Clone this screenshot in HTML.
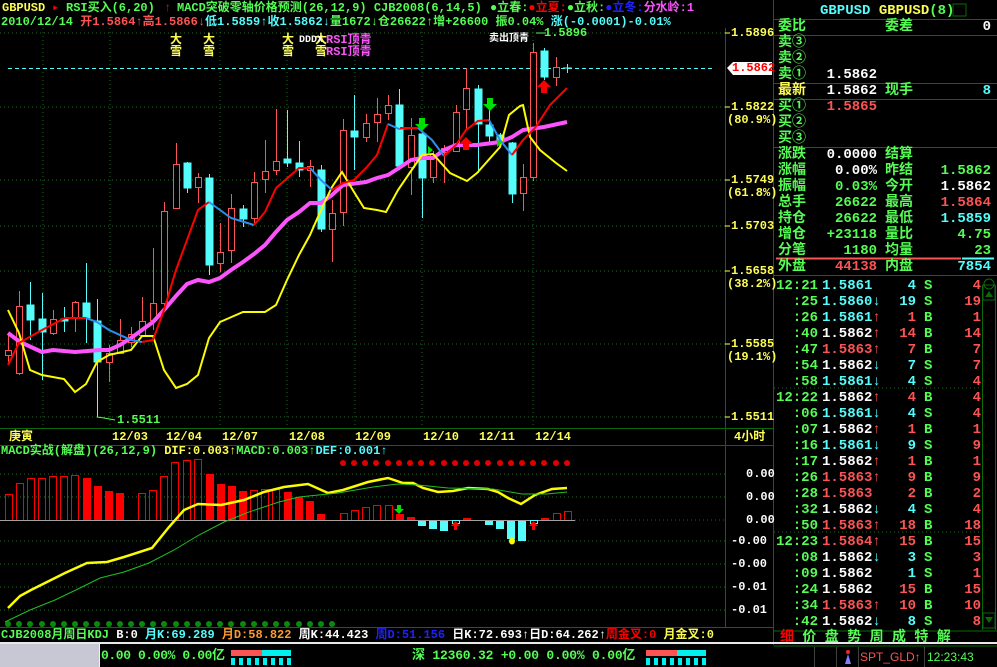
<!DOCTYPE html>
<html><head><meta charset="utf-8">
<style>
*{margin:0;padding:0}
body{width:997px;height:667px;background:#000;overflow:hidden;position:relative;font-family:"Liberation Mono","Noto Sans CJK SC",monospace;font-weight:bold}
.t{position:absolute;white-space:pre;font-size:12px;line-height:14px}
.r{position:absolute;white-space:pre;font-size:14px;line-height:16px}
.g{color:#54fc54}.y{color:#fcfc54}.rd{color:#fc5454}.c{color:#54fcfc}.w{color:#fcfcfc}.m{color:#fc54fc}.b{color:#2020ff}.o{color:#fc9a30}.R{color:#fc0000}
.ra{text-align:right}
</style></head><body>
<svg width="997" height="667" style="position:absolute;left:0;top:0">
<g stroke="#0a6a0a" stroke-width="1">
<line x1="725.5" y1="28" x2="725.5" y2="628"/>
<line x1="773.5" y1="0" x2="773.5" y2="645"/>
<line x1="0" y1="428.5" x2="773" y2="428.5"/>
<line x1="0" y1="445.5" x2="773" y2="445.5"/>
<line x1="0" y1="627.5" x2="773" y2="627.5"/>
<line x1="774" y1="19.5" x2="997" y2="19.5"/>
<line x1="774" y1="35.5" x2="997" y2="35.5"/>
<line x1="774" y1="83.5" x2="997" y2="83.5"/>
<line x1="774" y1="99.5" x2="997" y2="99.5"/>
<line x1="774" y1="147.5" x2="997" y2="147.5"/>
<line x1="774" y1="275.5" x2="997" y2="275.5"/>
<line x1="982.5" y1="285" x2="982.5" y2="630"/>
<line x1="995.5" y1="285" x2="995.5" y2="630"/>
</g>
<line x1="776" y1="258.5" x2="961" y2="258.5" stroke="#fc5454" stroke-width="2"/>
<line x1="962" y1="258.5" x2="994" y2="258.5" stroke="#54fcfc" stroke-width="2"/>
<g stroke="#1e6e1e" stroke-dasharray="1,3">
<line x1="0" y1="33" x2="725" y2="33"/><line x1="0" y1="107" x2="725" y2="107"/><line x1="0" y1="180" x2="725" y2="180"/><line x1="0" y1="226" x2="725" y2="226"/><line x1="0" y1="271" x2="725" y2="271"/><line x1="0" y1="344" x2="725" y2="344"/><line x1="0" y1="417" x2="725" y2="417"/>
<line x1="43" y1="28" x2="43" y2="428"/><line x1="110" y1="28" x2="110" y2="428"/><line x1="220" y1="28" x2="220" y2="428"/><line x1="287" y1="28" x2="287" y2="428"/><line x1="355" y1="28" x2="355" y2="428"/><line x1="422" y1="28" x2="422" y2="428"/><line x1="533" y1="28" x2="533" y2="428"/>
<line x1="0" y1="474" x2="725" y2="474"/><line x1="0" y1="497" x2="725" y2="497"/><line x1="575" y1="520" x2="725" y2="520"/><line x1="0" y1="541" x2="725" y2="541"/><line x1="0" y1="564" x2="725" y2="564"/><line x1="0" y1="587" x2="725" y2="587"/><line x1="0" y1="610" x2="725" y2="610"/>
<line x1="774" y1="388" x2="982" y2="388"/><line x1="774" y1="532" x2="982" y2="532"/>
</g>
<g stroke="#fcfc54"><line x1="725" y1="33" x2="730" y2="33"/><line x1="725" y1="107" x2="730" y2="107"/><line x1="725" y1="180" x2="730" y2="180"/><line x1="725" y1="226" x2="730" y2="226"/><line x1="725" y1="271" x2="730" y2="271"/><line x1="725" y1="344" x2="730" y2="344"/><line x1="725" y1="417" x2="730" y2="417"/></g>
<line x1="8" y1="68.5" x2="712" y2="68.5" stroke="#54fcfc" stroke-dasharray="4,3"/>
<g stroke-width="1">
<g stroke="#fc5454" fill="#000">
<line x1="8.5" y1="333" x2="8.5" y2="365"/><rect x="5.5" y="350.5" width="6" height="5"/>
<line x1="19.5" y1="291" x2="19.5" y2="375"/><rect x="16.5" y="306.5" width="6" height="67"/>
<line x1="53.5" y1="310" x2="53.5" y2="335"/><rect x="50.5" y="319.5" width="6" height="14"/>
<line x1="75.5" y1="301" x2="75.5" y2="332"/><rect x="72.5" y="302.5" width="6" height="16"/>
<line x1="109.5" y1="345" x2="109.5" y2="382"/><rect x="106.5" y="353.5" width="6" height="9"/>
<line x1="120.5" y1="319" x2="120.5" y2="353"/><rect x="117.5" y="340.5" width="6" height="13"/>
<line x1="131.5" y1="327" x2="131.5" y2="347"/><rect x="128.5" y="334.5" width="6" height="8"/>
<line x1="142.5" y1="297" x2="142.5" y2="337"/><rect x="139.5" y="321.5" width="6" height="14"/>
<line x1="153.5" y1="248" x2="153.5" y2="330"/><rect x="150.5" y="303.5" width="6" height="17"/>
<line x1="164.5" y1="202" x2="164.5" y2="310"/><rect x="161.5" y="211.5" width="6" height="92"/>
<line x1="176.5" y1="143" x2="176.5" y2="208"/><rect x="173.5" y="164.5" width="6" height="44"/>
<line x1="198.5" y1="173" x2="198.5" y2="203"/><rect x="195.5" y="177.5" width="6" height="10"/>
<line x1="220.5" y1="223" x2="220.5" y2="272"/><rect x="217.5" y="252.5" width="6" height="11"/>
<line x1="231.5" y1="194" x2="231.5" y2="263"/><rect x="228.5" y="208.5" width="6" height="42"/>
<line x1="254.5" y1="172" x2="254.5" y2="223"/><rect x="251.5" y="182.5" width="6" height="36"/>
<line x1="265.5" y1="140" x2="265.5" y2="193"/><rect x="262.5" y="171.5" width="6" height="8"/>
<line x1="276.5" y1="109" x2="276.5" y2="175"/><rect x="273.5" y="161.5" width="6" height="9"/>
<line x1="310.5" y1="160" x2="310.5" y2="187"/><rect x="307.5" y="166.5" width="6" height="4"/>
<line x1="332.5" y1="200" x2="332.5" y2="262"/><rect x="329.5" y="213.5" width="6" height="16"/>
<line x1="343.5" y1="119" x2="343.5" y2="226"/><rect x="340.5" y="130.5" width="6" height="82"/>
<line x1="366.5" y1="114" x2="366.5" y2="142"/><rect x="363.5" y="123.5" width="6" height="14"/>
<line x1="377.5" y1="98" x2="377.5" y2="142"/><rect x="374.5" y="114.5" width="6" height="8"/>
<line x1="388.5" y1="95" x2="388.5" y2="120"/><rect x="385.5" y="105.5" width="6" height="8"/>
<line x1="411.5" y1="118" x2="411.5" y2="195"/><rect x="408.5" y="135.5" width="6" height="32"/>
<line x1="433.5" y1="151" x2="433.5" y2="183"/><rect x="430.5" y="154.5" width="6" height="23"/>
<line x1="444.5" y1="145" x2="444.5" y2="183"/><rect x="441.5" y="148.5" width="6" height="4"/>
<line x1="456.5" y1="105" x2="456.5" y2="152"/><rect x="453.5" y="112.5" width="6" height="39"/>
<line x1="466.5" y1="68" x2="466.5" y2="130"/><rect x="463.5" y="88.5" width="6" height="21"/>
<line x1="523.5" y1="164" x2="523.5" y2="211"/><rect x="520.5" y="177.5" width="6" height="16"/>
<line x1="533.5" y1="43" x2="533.5" y2="181"/><rect x="530.5" y="52.5" width="6" height="125"/>
<line x1="556.5" y1="57" x2="556.5" y2="86"/><rect x="553.5" y="67.5" width="6" height="10"/>
</g>
<g stroke="#54fcfc" fill="#54fcfc">
<line x1="30.5" y1="282" x2="30.5" y2="340"/><rect x="27" y="305" width="7" height="15"/>
<line x1="42.5" y1="293" x2="42.5" y2="380"/><rect x="39" y="319" width="7" height="13"/>
<line x1="64.5" y1="307" x2="64.5" y2="332"/><rect x="61" y="319" width="7" height="2"/>
<line x1="86.5" y1="263" x2="86.5" y2="343"/><rect x="83" y="303" width="7" height="15"/>
<line x1="97.5" y1="299" x2="97.5" y2="417"/><rect x="94" y="321" width="7" height="41"/>
<line x1="187.5" y1="162" x2="187.5" y2="193"/><rect x="184" y="163" width="7" height="25"/>
<line x1="209.5" y1="174" x2="209.5" y2="275"/><rect x="206" y="178" width="7" height="87"/>
<line x1="243.5" y1="205" x2="243.5" y2="227"/><rect x="240" y="209" width="7" height="10"/>
<line x1="287.5" y1="110" x2="287.5" y2="167"/><rect x="284" y="159" width="7" height="4"/>
<line x1="299.5" y1="141" x2="299.5" y2="177"/><rect x="296" y="163" width="7" height="7"/>
<line x1="321.5" y1="165" x2="321.5" y2="232"/><rect x="318" y="170" width="7" height="59"/>
<line x1="354.5" y1="95" x2="354.5" y2="170"/><rect x="351" y="131" width="7" height="6"/>
<line x1="399.5" y1="89" x2="399.5" y2="170"/><rect x="396" y="105" width="7" height="61"/>
<line x1="422.5" y1="133" x2="422.5" y2="218"/><rect x="419" y="134" width="7" height="44"/>
<line x1="478.5" y1="85" x2="478.5" y2="173"/><rect x="475" y="89" width="7" height="35"/>
<line x1="489.5" y1="110" x2="489.5" y2="142"/><rect x="486" y="125" width="7" height="11"/>
<line x1="500.5" y1="133" x2="500.5" y2="145"/><rect x="497" y="135" width="7" height="7"/>
<line x1="512.5" y1="142" x2="512.5" y2="203"/><rect x="509" y="143" width="7" height="51"/>
<line x1="544.5" y1="48" x2="544.5" y2="80"/><rect x="541" y="51" width="7" height="26"/>
</g>
</g>
<path d="M563 68h9M567.5 64v9" stroke="#54fcfc"/>
<polyline fill="none" stroke="#fc54fc" stroke-width="4" points="8,333 20,342 42,352 53,350 75,352 100,350 109,350 120,345 131,338 142,330 153,322 164,310 176,296 187,284 198,280 209,282 220,278 231,270 243,262 254,254 265,245 276,232 287,220 299,212 310,203 321,203 332,195 343,185 366,182 377,178 388,175 399,168 411,160 422,158 433,158 444,150 456,145 477,145 500,142 512,137 523,130 544,127 567,122"/>
<polyline fill="none" stroke="#fcfc00" stroke-width="2" points="8,310 19,333 30,370 42,375 64,379 75,392 86,384 97,362 109,355 131,350 142,336 153,336 164,370 176,388 187,384 198,375 209,338 220,322 243,312 265,312 276,305 287,280 299,255 310,235 321,210 332,187 342,172 354,192 364,208 377,210 386,212 398,190 411,171 422,155 433,154 450,173 467,181 477,173 500,147 509,115 520,106 523,105 530,137 540,150 556,163 567,171"/>
<g fill="none" stroke-width="2">
<polyline stroke="#fc0000" points="8,365 19,343 42,330 65,318 86,318"/>
<polyline stroke="#2a90f0" points="86,318 97,322 109,330 131,340 142,342"/>
<polyline stroke="#fc0000" points="142,342 153,340 164,310 176,270 198,210 209,202"/>
<polyline stroke="#2a90f0" points="209,202 220,210 231,218 254,225"/>
<polyline stroke="#fc0000" points="254,225 265,212 276,188 299,168 310,168"/>
<polyline stroke="#2a90f0" points="310,168 321,180 332,190"/>
<polyline stroke="#fc0000" points="332,190 343,183 354,180 366,168 377,155 388,124"/>
<polyline stroke="#2a90f0" points="388,124 399,129 411,128"/>
<polyline stroke="#fc0000" points="400,128 411,128 418,128"/>
<polyline stroke="#2a90f0" points="418,128 432,140 444,156"/>
<polyline stroke="#fc0000" points="444,156 456,145 466,130 478,121 489,120"/>
<polyline stroke="#2a90f0" points="489,120 500,140 512,155"/>
<polyline stroke="#fc0000" points="512,155 523,140 535,128 550,105 567,88"/>
</g>
<g fill="#00e000"><path d="M419 118h6v6h4l-7 7-7-7h4z"/><path d="M487 98h6v6h4l-7 7-7-7h4z"/><path d="M428 146l5 4-5 4z"/><path d="M497 139l5 4-5 4z"/></g>
<g fill="#fc0000"><path d="M541 93h6v-6h4l-7-7-7 7h4z"/><path d="M463 150h6v-6h4l-7-7-7 7h4z"/></g>
<polyline points="97,417 104,418 115,420" fill="none" stroke="#54fc54"/>
<line x1="536" y1="33" x2="546" y2="33" stroke="#54fc54"/>
<path d="M727 68l6-6h39v13h-39z" fill="#fcfcfc"/>
<g stroke="#fc0000" fill="none">
<rect x="5.5" y="494.5" width="7" height="26"/><rect x="16.5" y="483.5" width="7" height="37"/><rect x="27.5" y="478.5" width="7" height="42"/><rect x="38.5" y="478.5" width="7" height="42"/><rect x="49.5" y="476.5" width="7" height="44"/><rect x="60.5" y="476.5" width="7" height="44"/><rect x="71.5" y="475.5" width="7" height="45"/>
<rect x="138.5" y="493.5" width="7" height="27"/><rect x="149.5" y="490.5" width="7" height="30"/><rect x="160.5" y="476.5" width="7" height="44"/><rect x="171.5" y="462.5" width="7" height="58"/><rect x="183.5" y="460.5" width="7" height="60"/><rect x="194.5" y="459.5" width="7" height="61"/>
<rect x="250.5" y="490.5" width="7" height="30"/><rect x="261.5" y="489.5" width="7" height="31"/><rect x="272.5" y="489.5" width="7" height="31"/>
<rect x="340.5" y="513.5" width="7" height="7"/><rect x="351.5" y="510.5" width="7" height="10"/><rect x="362.5" y="507.5" width="7" height="13"/><rect x="373.5" y="505.5" width="7" height="15"/><rect x="385.5" y="505.5" width="7" height="15"/>
<rect x="553.5" y="513.5" width="7" height="7"/><rect x="564.5" y="511.5" width="7" height="9"/>
</g>
<g fill="#fc0000">
<rect x="83" y="478" width="8" height="42"/><rect x="94" y="486" width="8" height="34"/><rect x="105" y="491" width="8" height="29"/><rect x="116" y="493" width="8" height="27"/>
<rect x="206" y="474" width="8" height="46"/><rect x="217" y="484" width="8" height="36"/><rect x="228" y="486" width="8" height="34"/><rect x="239" y="491" width="8" height="29"/>
<rect x="284" y="492" width="8" height="28"/><rect x="295" y="497" width="8" height="23"/><rect x="306" y="501" width="8" height="19"/><rect x="317" y="514" width="8" height="6"/>
<rect x="396" y="514" width="8" height="6"/><rect x="407" y="517" width="8" height="3"/><rect x="463" y="518" width="8" height="2"/><rect x="541" y="518" width="8" height="2"/>
</g>
<line x1="0" y1="520.5" x2="575" y2="520.5" stroke="#a0a0a0"/>
<g fill="#54fcfc"><rect x="418" y="521" width="8" height="5"/><rect x="429" y="521" width="8" height="8"/><rect x="440" y="521" width="8" height="10"/><rect x="485" y="521" width="8" height="4"/><rect x="496" y="521" width="8" height="8"/><rect x="507" y="521" width="8" height="18"/><rect x="518" y="521" width="8" height="20"/></g>
<g fill="none" stroke="#54fcfc"><rect x="452.5" y="520.5" width="7" height="3"/><rect x="530.5" y="520.5" width="7" height="3"/></g>
<g fill="#00e000"><path d="M397 505h4v4h3l-5 5-5-5h3z"/></g>
<g fill="#fc0000"><path d="M454 530h3v-4h3l-4.5-5-4.5 5h3z"/><path d="M532 530h3v-4h3l-4.5-5-4.5 5h3z"/></g>
<ellipse cx="512" cy="541" rx="3" ry="3.5" fill="#fcfc00"/>
<g fill="#e00000">
<circle cx="343" cy="463" r="3"/><circle cx="354" cy="463" r="3"/><circle cx="365" cy="463" r="3"/><circle cx="376" cy="463" r="3"/><circle cx="388" cy="463" r="3"/><circle cx="399" cy="463" r="3"/><circle cx="410" cy="463" r="3"/><circle cx="421" cy="463" r="3"/><circle cx="432" cy="463" r="3"/><circle cx="444" cy="463" r="3"/><circle cx="455" cy="463" r="3"/><circle cx="466" cy="463" r="3"/><circle cx="477" cy="463" r="3"/><circle cx="488" cy="463" r="3"/><circle cx="500" cy="463" r="3"/><circle cx="511" cy="463" r="3"/><circle cx="522" cy="463" r="3"/><circle cx="533" cy="463" r="3"/><circle cx="544" cy="463" r="3"/><circle cx="556" cy="463" r="3"/><circle cx="567" cy="463" r="3"/>
</g>
<g fill="#0a8a0a">
<circle cx="8" cy="624" r="3"/><circle cx="19" cy="624" r="3"/><circle cx="30" cy="624" r="3"/><circle cx="42" cy="624" r="3"/><circle cx="53" cy="624" r="3"/><circle cx="64" cy="624" r="3"/><circle cx="75" cy="624" r="3"/><circle cx="86" cy="624" r="3"/><circle cx="97" cy="624" r="3"/><circle cx="109" cy="624" r="3"/><circle cx="120" cy="624" r="3"/><circle cx="131" cy="624" r="3"/><circle cx="142" cy="624" r="3"/><circle cx="153" cy="624" r="3"/><circle cx="164" cy="624" r="3"/><circle cx="176" cy="624" r="3"/><circle cx="187" cy="624" r="3"/><circle cx="198" cy="624" r="3"/><circle cx="209" cy="624" r="3"/><circle cx="220" cy="624" r="3"/><circle cx="231" cy="624" r="3"/><circle cx="243" cy="624" r="3"/><circle cx="254" cy="624" r="3"/><circle cx="265" cy="624" r="3"/><circle cx="276" cy="624" r="3"/><circle cx="287" cy="624" r="3"/><circle cx="299" cy="624" r="3"/><circle cx="310" cy="624" r="3"/><circle cx="321" cy="624" r="3"/><circle cx="332" cy="624" r="3"/>
</g>
<polyline fill="none" stroke="#fcfc00" stroke-width="2.5" points="8,608 20,596 31,590 45,583 65,573 87,563 107,562 124,557 152,548 169,527 184,510 198,504 221,505 244,500 264,492 284,487 308,484 328,493 343,490 368,482 388,478 403,483 413,483 423,488 438,492 453,491 468,488 488,489 498,492 508,498 521,504 535,495 552,489 567,488"/>
<polyline fill="none" stroke="#20c020" stroke-width="1" points="5,622 30,610 55,600 80,588 100,578 124,572 149,563 174,550 199,535 224,522 249,512 279,502 299,497 338,493 373,487 398,484 418,485 448,488 493,489 522,494 547,494 567,492"/>
<rect x="0" y="642" width="997" height="2" fill="#e8e8e8"/>
<rect x="0" y="644" width="99" height="23" fill="#c8c8d4"/>
<line x1="99.5" y1="644" x2="99.5" y2="667" stroke="#f0f0f0"/>
<rect x="231" y="650" width="32" height="6" fill="#fc5454"/><rect x="262" y="650" width="29" height="6" fill="#00f0f0"/>
<g fill="#00f0f0"><rect x="231" y="658" width="4" height="7"/><rect x="239" y="658" width="4" height="7"/><rect x="247" y="658" width="4" height="7"/><rect x="255" y="658" width="4" height="7"/><rect x="263" y="658" width="4" height="7"/><rect x="271" y="658" width="4" height="7"/><rect x="279" y="658" width="4" height="7"/><rect x="287" y="658" width="4" height="7"/></g>
<rect x="646" y="650" width="32" height="6" fill="#fc5454"/><rect x="677" y="650" width="29" height="6" fill="#00f0f0"/>
<g fill="#00f0f0"><rect x="646" y="658" width="4" height="7"/><rect x="654" y="658" width="4" height="7"/><rect x="662" y="658" width="4" height="7"/><rect x="670" y="658" width="4" height="7"/><rect x="678" y="658" width="4" height="7"/><rect x="686" y="658" width="4" height="7"/><rect x="694" y="658" width="4" height="7"/><rect x="702" y="658" width="4" height="7"/></g>
<g stroke="#404040"><line x1="814.5" y1="647" x2="814.5" y2="667"/><line x1="836.5" y1="647" x2="836.5" y2="667"/><line x1="858.5" y1="647" x2="858.5" y2="667"/><line x1="924.5" y1="647" x2="924.5" y2="667"/></g>
<path d="M845 664l3-10 3 10z" fill="#8080ff"/><circle cx="848" cy="652" r="2" fill="#fc2020"/>
<path d="M774 646h223M774 631h223" stroke="#0a6a0a"/>
<rect x="983" y="285" width="12" height="15" fill="none" stroke="#0a6a0a"/><path d="M985 297l4-6 4 6z" fill="#0a6a0a"/>
<rect x="983" y="613" width="12" height="15" fill="none" stroke="#0a6a0a"/><path d="M985 617l4 6 4-6z" fill="#0a6a0a"/>
<circle cx="989" cy="284" r="5" fill="none" stroke="#0a6a0a"/>
<rect x="953" y="4" width="13" height="12" fill="none" stroke="#0a6a0a"/>
</svg>

<div class="t y" style="left:2px;top:1px">GBPUSD</div>
<div class="t R" style="left:52px;top:1px">▸</div>
<div class="t g" style="left:66px;top:1px">RSI买入(6,20)</div>
<div class="t R" style="left:164px;top:1px">↑</div>
<div class="t g" style="left:177px;top:1px">MACD突破零轴价格预测(26,12,9) CJB2008(6,14,5)</div>
<div class="t" style="left:490px;top:1px"><span class="g">●立春:</span><span class="R">●立夏:</span><span class="g">●立秋:</span><span class="b">●立冬:</span><span class="m">分水岭:1</span></div>
<div class="t" style="left:1px;top:15px"><span class="g">2010/12/14 </span><span class="rd">开1.5864↑高1.5866↓</span><span class="c">低1.5859↑收1.5862↓</span><span class="g">量1672↓仓26622↑增+26600 振0.04% </span><span class="c">涨(-0.0001)-0.01%</span></div>

<div class="t y" style="left:170px;top:34px;line-height:12px">大<br>雪</div>
<div class="t y" style="left:203px;top:34px;line-height:12px">大<br>雪</div>
<div class="t y" style="left:282px;top:34px;line-height:12px">大<br>雪</div>
<div class="t y" style="left:315px;top:34px;line-height:12px">大<br>雪</div>
<div class="t w" style="left:299px;top:34px;font-size:10px">DDDX</div>
<div class="t m" style="left:326px;top:34px;line-height:12px">RSI顶青<br>RSI顶青</div>
<div class="t w" style="left:489px;top:33px;font-size:10px">卖出顶青</div>
<div class="t g" style="left:544px;top:26px">1.5896</div>
<div class="t g" style="left:117px;top:413px">1.5511</div>

<div class="t y" style="left:731px;top:26px">1.5896</div>
<div class="t R" style="left:732px;top:61px">1.5862</div>
<div class="t y" style="left:731px;top:100px">1.5822</div>
<div class="t y" style="left:727px;top:113px">(80.9%)</div>
<div class="t y" style="left:731px;top:173px">1.5749</div>
<div class="t y" style="left:727px;top:186px">(61.8%)</div>
<div class="t y" style="left:731px;top:219px">1.5703</div>
<div class="t y" style="left:731px;top:264px">1.5658</div>
<div class="t y" style="left:727px;top:277px">(38.2%)</div>
<div class="t y" style="left:731px;top:337px">1.5585</div>
<div class="t y" style="left:727px;top:350px">(19.1%)</div>
<div class="t y" style="left:731px;top:410px">1.5511</div>

<div class="t y" style="left:9px;top:430px">庚寅</div>
<div class="t y" style="left:112px;top:430px">12/03</div>
<div class="t y" style="left:166px;top:430px">12/04</div>
<div class="t y" style="left:222px;top:430px">12/07</div>
<div class="t y" style="left:289px;top:430px">12/08</div>
<div class="t y" style="left:355px;top:430px">12/09</div>
<div class="t y" style="left:423px;top:430px">12/10</div>
<div class="t y" style="left:479px;top:430px">12/11</div>
<div class="t y" style="left:535px;top:430px">12/14</div>
<div class="t y" style="left:734px;top:430px">4小时</div>

<div class="t" style="left:1px;top:444px"><span class="g">MACD实战(解盘)(26,12,9) </span><span class="y">DIF:0.003↑</span><span class="g">MACD:0.003↑</span><span class="c">DEF:0.001↑</span></div>
<div class="t w" style="left:746px;top:467px">0.00</div>
<div class="t w" style="left:746px;top:490px">0.00</div>
<div class="t w" style="left:746px;top:513px">0.00</div>
<div class="t w" style="left:731px;top:534px">-0.00</div>
<div class="t w" style="left:731px;top:557px">-0.00</div>
<div class="t w" style="left:731px;top:580px">-0.01</div>
<div class="t w" style="left:731px;top:603px">-0.01</div>

<div class="t" style="left:1px;top:628px"><span class="g">CJB2008月周日KDJ </span><span class="w">B:0 </span><span class="c">月K:69.289 </span><span class="o">月D:58.822 </span><span class="w">周K:44.423 </span><span class="b">周D:51.156 </span><span class="w">日K:72.693↑日D:64.262↑</span><span class="R">周金叉:0 </span><span class="y">月金叉:0</span></div>

<div class="r g" style="left:101px;top:648px;font-size:13px;letter-spacing:-0.4px">0.00 0.00% 0.00亿</div>
<div class="r g" style="left:412px;top:648px;font-size:13px;letter-spacing:-0.2px">深 12360.32 +0.00 0.00% 0.00亿</div>
<div class="r rd" style="left:860px;top:649px;font-size:12px;font-family:'Liberation Sans',sans-serif;font-weight:normal">SPT_GLD↑</div>
<div class="r g" style="left:927px;top:649px;font-size:12px;font-family:'Liberation Sans',sans-serif;font-weight:normal">12:23:43</div>

<div class="r" style="left:820px;top:3px"><span class="c">GBPUSD</span> <span class="y">GBPUSD</span><span class="g">(8)</span></div>
<div class="r g" style="left:778px;top:19px;line-height:16px">委比<br>卖③<br>卖②<br>卖①<br><span class="y">最新</span><br>买①<br>买②<br>买③<br>涨跌<br>涨幅<br>振幅<br>总手<br>持仓<br>增仓<br>分笔<br>外盘</div>
<div class="r g" style="left:885px;top:19px;line-height:16px">委差<br><br><br><br>现手<br><br><br><br>结算<br>昨结<br>今开<br>最高<br>最低<br>量比<br>均量<br>内盘</div>
<div class="r ra" style="left:800px;width:77px;top:19px;line-height:16px"><br><br><br><span class="w">1.5862</span><br><span class="w">1.5862</span><br><span class="rd">1.5865</span><br><br><br><span class="w">0.0000</span><br><span class="w">0.00%</span><br><span class="g">0.03%</span><br><span class="g">26622</span><br><span class="g">26622</span><br><span class="g">+23118</span><br><span class="g">1180</span><br><span class="rd">44138</span></div>
<div class="r ra" style="left:900px;width:91px;top:19px;line-height:16px"><span class="w">0</span><br><br><br><br><span class="c">8</span><br><br><br><br><br><span class="g">1.5862</span><br><span class="w">1.5862</span><br><span class="rd">1.5864</span><br><span class="c">1.5859</span><br><span class="g">4.75</span><br><span class="g">23</span><br><span class="c">7854</span></div>

<div class="r g ra" style="left:774px;width:44px;top:278px">12:21<br>:25<br>:26<br>:40<br>:47<br>:54<br>:58<br>12:22<br>:06<br>:07<br>:16<br>:17<br>:26<br>:28<br>:32<br>:50<br>12:23<br>:08<br>:09<br>:24<br>:34<br>:42</div>
<div class="r" style="left:822px;top:278px"><span class="c">1.5861</span><br><span class="c">1.5860↓</span><br><span class="c">1.5861</span><span class="rd">↑</span><br><span class="w">1.5862</span><span class="rd">↑</span><br><span class="rd">1.5863↑</span><br><span class="w">1.5862</span><span class="c">↓</span><br><span class="c">1.5861↓</span><br><span class="w">1.5862</span><span class="rd">↑</span><br><span class="c">1.5861↓</span><br><span class="w">1.5862</span><span class="rd">↑</span><br><span class="c">1.5861↓</span><br><span class="w">1.5862</span><span class="rd">↑</span><br><span class="rd">1.5863↑</span><br><span class="rd">1.5863</span><br><span class="w">1.5862</span><span class="c">↓</span><br><span class="rd">1.5863↑</span><br><span class="rd">1.5864↑</span><br><span class="w">1.5862</span><span class="c">↓</span><br><span class="w">1.5862</span><br><span class="w">1.5862</span><br><span class="rd">1.5863↑</span><br><span class="w">1.5862</span><span class="c">↓</span></div>
<div class="r ra" style="left:880px;width:36px;top:278px"><span class="c">4</span><br><span class="c">19</span><br><span class="rd">1</span><br><span class="rd">14</span><br><span class="rd">7</span><br><span class="c">7</span><br><span class="c">4</span><br><span class="rd">4</span><br><span class="c">4</span><br><span class="rd">1</span><br><span class="c">9</span><br><span class="rd">1</span><br><span class="rd">9</span><br><span class="rd">2</span><br><span class="c">4</span><br><span class="rd">18</span><br><span class="rd">15</span><br><span class="c">3</span><br><span class="c">1</span><br><span class="rd">15</span><br><span class="rd">10</span><br><span class="c">8</span></div>
<div class="r g" style="left:924px;top:278px">S<br>S<br>B<br>B<br>B<br>S<br>S<br>B<br>S<br>B<br>S<br>B<br>B<br>B<br>S<br>B<br>B<br>S<br>S<br>B<br>B<br>S</div>
<div class="r rd ra" style="left:940px;width:41px;top:278px">4<br>19<br>1<br>14<br>7<br>7<br>4<br>4<br>4<br>1<br>9<br>1<br>9<br>2<br>4<br>18<br>15<br>3<br>1<br>15<br>10<br>8</div>

<div class="r" style="left:780px;top:630px"><span class="R">细</span><span class="g"> 价 盘 势 周 成 特 解</span></div>
</body></html>
